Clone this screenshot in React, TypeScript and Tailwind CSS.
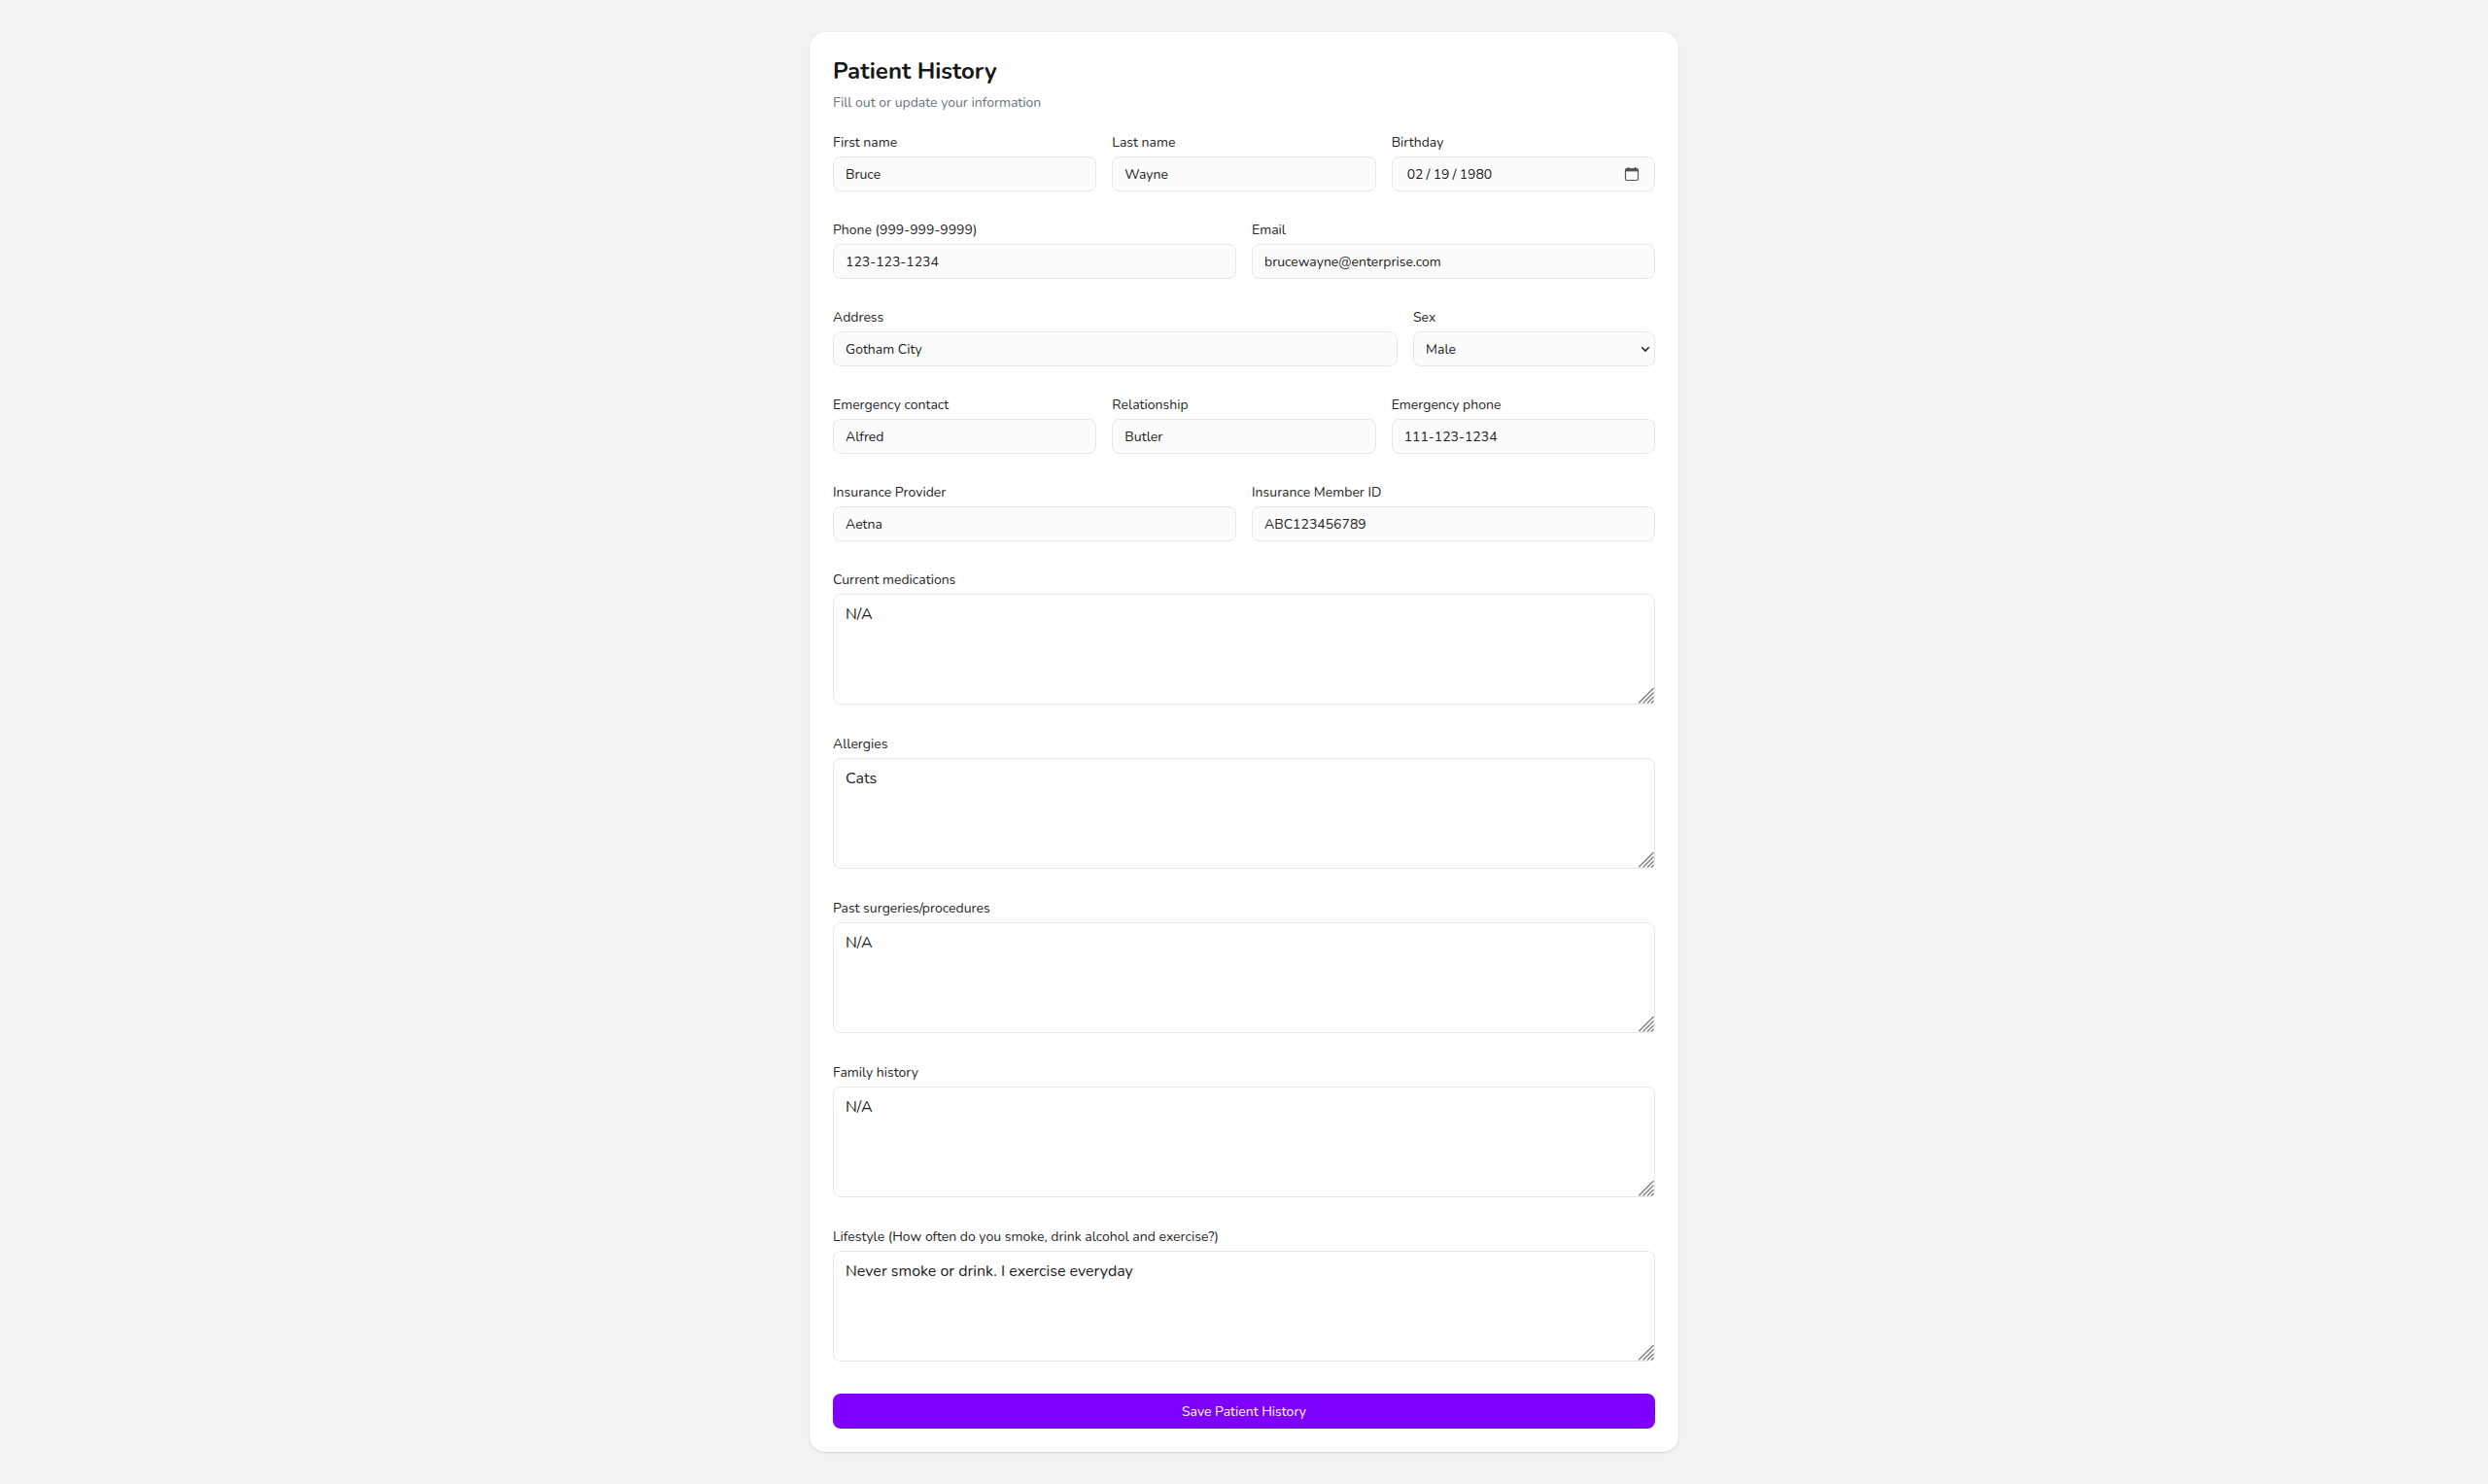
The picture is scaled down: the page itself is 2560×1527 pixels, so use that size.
import React from "react";

const labelCls = "text-sm leading-5 text-[#262626]";
const inputCls =
  "h-9 w-full rounded-lg border border-[#e7e7eb] bg-[#fcfcfc] px-3 text-sm text-[#212121] outline-none";
const areaCls =
  "block h-[114px] w-full resize-none rounded-lg border border-[#e7e7eb] bg-white px-3 py-2 text-base text-[#212121] outline-none";

function Field({ label, value }: { label: string; value: string }) {
  return (
    <label className="flex min-w-0 flex-col gap-1">
      <span className={labelCls}>{label}</span>
      <input className={inputCls} type="text" defaultValue={value} />
    </label>
  );
}

function DateField({ label, value }: { label: string; value: string }) {
  return (
    <label className="flex min-w-0 flex-col gap-1">
      <span className={labelCls}>{label}</span>
      <span className="relative block">
        <input
          className="h-9 w-full rounded-lg border border-[#e7e7eb] bg-[#fcfcfc] pr-10 pl-[15px] text-sm [word-spacing:-0.5px] text-[#212121] outline-none"
          type="text"
          defaultValue={value}
        />
        <svg
          className="pointer-events-none absolute top-[10px] right-[16px]"
          width="16"
          height="16"
          viewBox="0 0 16 16"
          fill="none"
          stroke="#555"
        >
          <rect x="1.5" y="2.5" width="13" height="12" rx="1.5" strokeWidth="1.2" />
          <path d="M1.5 4.2h13" strokeWidth="2.4" />
          <path d="M4.5 1v2.5M11.5 1v2.5" strokeWidth="1.4" />
        </svg>
      </span>
    </label>
  );
}

function SelectField({ label, value, options }: { label: string; value: string; options: string[] }) {
  return (
    <label className="flex min-w-0 flex-col gap-1">
      <span className={labelCls}>{label}</span>
      <span className="relative block">
        <select className={`${inputCls} appearance-none pt-[1px]`} defaultValue={value}>
          {options.map((o) => (
            <option key={o}>{o}</option>
          ))}
        </select>
        <svg
          className="pointer-events-none absolute top-[15px] right-[5px]"
          width="10"
          height="7"
          viewBox="0 0 10 7"
          fill="none"
          stroke="#222"
          strokeWidth="1.6"
        >
          <path d="M1.3 1.3 5 5l3.7-3.7" />
        </svg>
      </span>
    </label>
  );
}

function Area({ label, value }: { label: string; value: string }) {
  return (
    <label className="flex flex-col gap-1">
      <span className={labelCls}>{label}</span>
      <span className="relative block h-[115px]">
        <textarea className={areaCls} defaultValue={value} />
        <svg
          className="pointer-events-none absolute top-[97px] right-[1px]"
          width="16"
          height="16"
          viewBox="0 0 16 16"
          fill="none"
          stroke="#808080"
          strokeWidth="1.4"
        >
          <path d="M0 15.5 15.5 0M4.5 15.5 15.5 4.500M9 15.5l6.500-6.500M13 15.5l2.500-2.500" />
        </svg>
      </span>
    </label>
  );
}

export default function App() {
  return (
    <div className="flex min-h-[1527px] items-start justify-center bg-[#f2f2f2] pt-[33px] font-['Nunito','Lato','Noto_Sans',sans-serif]">
      <form className="w-[894px] rounded-2xl bg-white p-6 shadow-sm">
        <h1 className="text-2xl leading-8 font-bold text-[#171717]">Patient History</h1>
        <p className="mt-[7px] mb-[21px] text-sm leading-5 text-[#6b7280]">Fill out or update your information</p>
        <div className="flex flex-col gap-[30px]">
          <div className="grid grid-cols-3 gap-4">
            <Field label="First name" value="Bruce" />
            <Field label="Last name" value="Wayne" />
            <DateField label="Birthday" value="02 / 19 / 1980" />
          </div>
          <div className="grid grid-cols-2 gap-4">
            <Field label="Phone (999-999-9999)" value="123-123-1234" />
            <Field label="Email" value="brucewayne@enterprise.com" />
          </div>
          <div className="grid grid-cols-[581px_1fr] gap-4">
            <Field label="Address" value="Gotham City" />
            <SelectField label="Sex" value="Male" options={["Male", "Female"]} />
          </div>
          <div className="grid grid-cols-3 gap-4">
            <Field label="Emergency contact" value="Alfred" />
            <Field label="Relationship" value="Butler" />
            <Field label="Emergency phone" value="111-123-1234" />
          </div>
          <div className="grid grid-cols-2 gap-4">
            <Field label="Insurance Provider" value="Aetna" />
            <Field label="Insurance Member ID" value="ABC123456789" />
          </div>
          <Area label="Current medications" value="N/A" />
          <Area label="Allergies" value="Cats" />
          <Area label="Past surgeries/procedures" value="N/A" />
          <Area label="Family history" value="N/A" />
          <Area label="Lifestyle (How often do you smoke, drink alcohol and exercise?)" value="Never smoke or drink. I exercise everyday" />
          <button type="button" className="mt-[2px] h-9 w-full rounded-lg bg-[#8000ff] pt-[1px] text-sm font-normal text-white">
            Save Patient History
          </button>
        </div>
      </form>
    </div>
  );
}
